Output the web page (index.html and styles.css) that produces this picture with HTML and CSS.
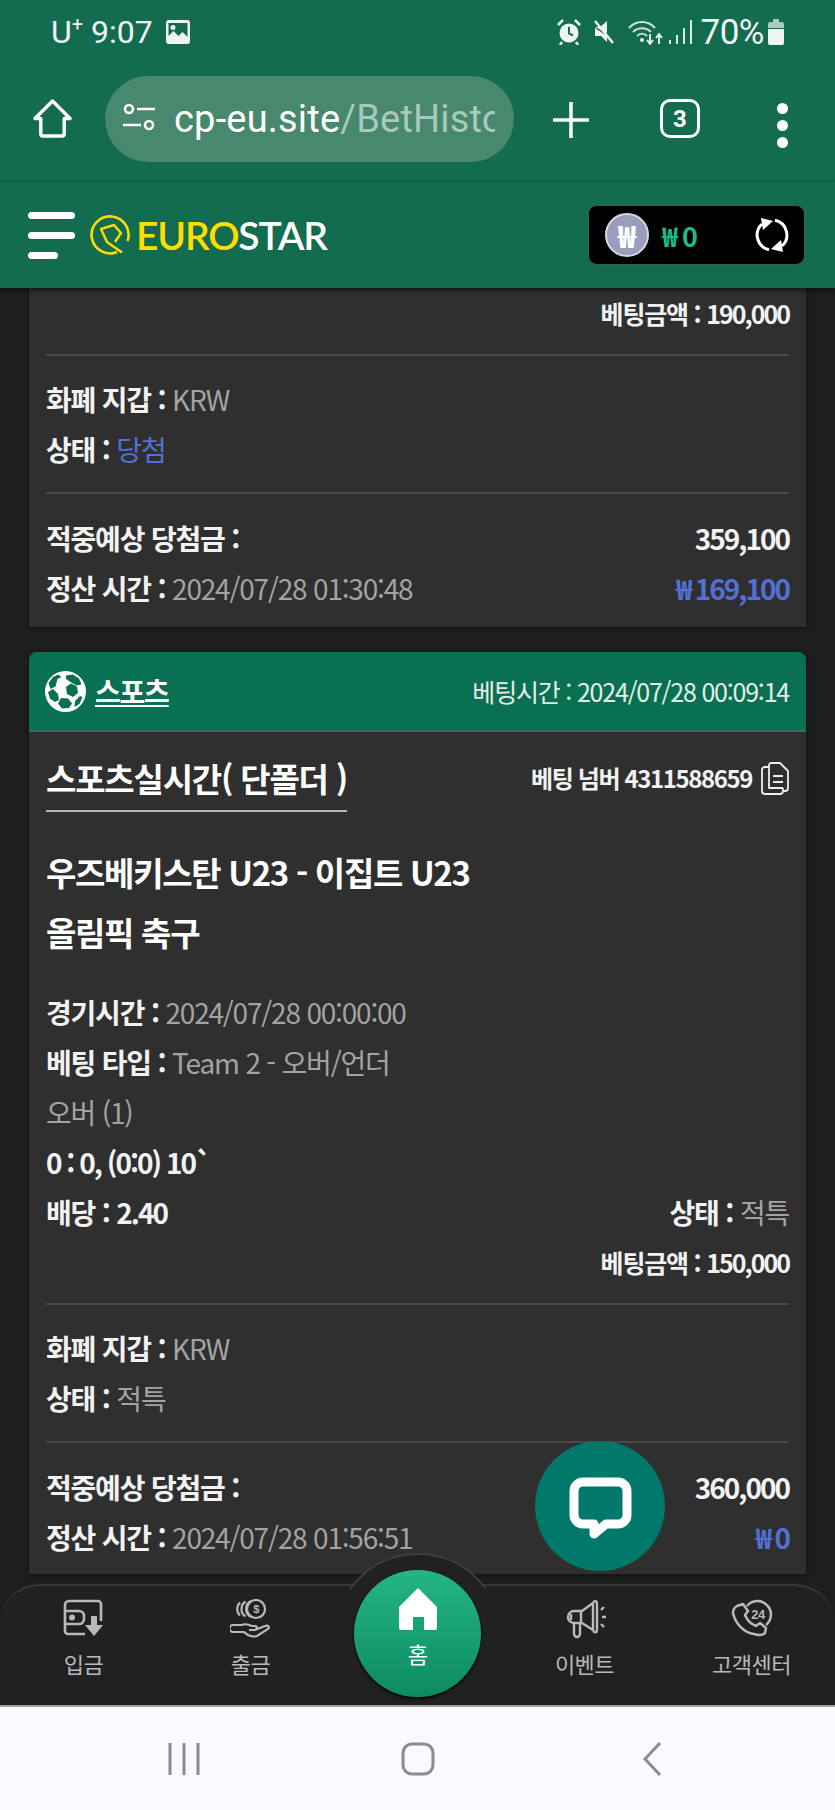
FILE: index.html
```html
<!DOCTYPE html>
<html lang="ko">
<head>
  <meta charset="UTF-8">
  <meta name="viewport" content="width=device-width, initial-scale=1.0">
  <title>베팅내역</title>
  <link rel="stylesheet" href="styles.css">
</head>
<body>
  <div class="phone-status">
    <div class="status-left">
      <span class="carrier">U<sup>+</sup></span>
      <span>9:07</span>
      <svg class="icon-gallery" viewBox="0 0 24 24"><path fill="#eef5f1" fill-rule="evenodd" d="M3 0h18a3 3 0 0 1 3 3v18a3 3 0 0 1-3 3H3a3 3 0 0 1-3-3V3a3 3 0 0 1 3-3zM2.500 3v13l5-5 5 5 4-4 5 5V3zM7 5a2.500 2.500 0 1 1 0 5 2.500 2.500 0 0 1 0-5z"/></svg>
    </div>
    <div class="status-right">
      <svg class="icon-alarm" viewBox="0 0 24 26"><circle cx="12" cy="14" r="9.500" fill="#eef5f1"/><path d="M12 8v6.500l4 2" fill="none" stroke="#136b50" stroke-width="2"/><path d="M1 6l5-5M23 6l-5-5M5 23l-2 3M19 23l2 3" stroke="#eef5f1" stroke-width="2.500"/></svg>
      <svg class="icon-mute" viewBox="0 0 22 26"><path fill="#eef5f1" d="M2 8h5l7-6v12zM2 9v8h6l6 6v-6z"/><path d="M2 2l18 22" stroke="#eef5f1" stroke-width="2.500"/></svg>
      <svg class="icon-wifi" viewBox="0 0 36 26"><path d="M1 9C8 1 20 1 27 9M5 13c5-5 13-5 18 0M9 17c3-3 7-3 10 0" fill="none" stroke="#cfe2da" stroke-width="2"/><circle cx="14" cy="21" r="2" fill="#eef5f1"/><path d="M22 15v10M19 21l3 4 3-4M31 25V15M28 19l3-4 3 4" fill="none" stroke="#eef5f1" stroke-width="1.800"/></svg>
      <svg class="icon-signal" viewBox="0 0 24 26"><path d="M2 21v4M9 16v9M16 9v16M23 1v24" stroke="#dfeae5" stroke-width="2"/></svg>
      <span class="battery-text">70%</span>
      <svg class="icon-battery" viewBox="0 0 16 26"><path fill="#a9c9bc" d="M5 0h6v3h3a2 2 0 0 1 2 2v4H0V5a2 2 0 0 1 2-2h3z"/><path fill="#eef5f1" d="M0 10h16v14a2 2 0 0 1-2 2H2a2 2 0 0 1-2-2z"/></svg>
    </div>
  </div>

  <div class="browser-bar">
    <svg class="icon-browser-home" viewBox="0 0 40 40"><path d="M2 20L20 2l18 18h-6v16a2 2 0 0 1-2 2H10a2 2 0 0 1-2-2V20z" fill="none" stroke="#fff" stroke-width="3.500" stroke-linejoin="round"/></svg>
    <div class="url-pill">
      <svg class="icon-tune" viewBox="0 0 32 32"><circle cx="6" cy="6" r="4" fill="none" stroke="#fff" stroke-width="2.500"/><path d="M14 6h18M0 22h18" stroke="#fff" stroke-width="2.500"/><circle cx="26" cy="22" r="4" fill="none" stroke="#fff" stroke-width="2.500"/></svg>
      <div class="url-text">cp-eu.site<span class="url-path">/BetHistory</span></div>
    </div>
    <svg class="icon-plus" viewBox="0 0 36 36"><path d="M18 0v36M0 18h36" stroke="#fff" stroke-width="3.500"/></svg>
    <div class="tab-count">3</div>
    <div class="dots"><i></i><i></i><i></i></div>
  </div>

  <header class="site-header">
    <div class="burger"><i></i><i></i><i class="short"></i></div>
    <svg class="logo-mark" viewBox="0 0 40 40"><path d="M37.500 26A18.500 18.500 0 1 0 27 37" fill="none" stroke="#ffdd00" stroke-width="2.600"/><path d="M32 37.500L17 27 11 14l13-4 7 8-6 9" fill="none" stroke="#ffdd00" stroke-width="2.400" stroke-linejoin="round"/></svg>
    <div class="logo-text"><span class="logo-euro">EURO</span>STAR</div>
    <div class="wallet">
      <div class="coin">₩</div>
      <div class="balance">₩ 0</div>
      <svg class="icon-refresh" viewBox="0 0 34 36"><path d="M14 32.700A15 15 0 0 1 7 7" fill="none" stroke="#fff" stroke-width="3"/><path d="M20 3.300A15 15 0 0 1 27 29" fill="none" stroke="#fff" stroke-width="3"/><path d="M6 1l12 3-10 9zM28 35l-12-3 10-9z" fill="#fff"/></svg>
    </div>
  </header>

  <main class="content">
    <section class="card card-clipped">
      <div class="row row-end row-small"><span><b>베팅금액 :</b> <b class="num">190,000</b></span></div>
      <hr class="line">
      <div class="row"><span><b>화폐 지갑 :</b> <span class="muted">KRW</span></span></div>
      <div class="row"><span><b>상태 :</b> <span class="blue">당첨</span></span></div>
      <hr class="line line-last">
      <div class="row"><b>적중예상 당첨금 :</b><b class="num">359,100</b></div>
      <div class="row"><span><b>정산 시간 :</b> <span class="muted">2024/07/28 01:30:48</span></span><b class="num blue">₩ 169,100</b></div>
    </section>

    <section class="card">
      <div class="card-head">
        <div class="head-left">
          <svg class="icon-ball" viewBox="0 0 41 41"><circle cx="20.500" cy="20.500" r="20.500" fill="#fff"/><g fill="#0a7052"><path d="M13 3.500L8 6 3.500 12l2 6 5-2.500 2-7.500 4-2z"/><path d="M21 4.500l7-1 6 4 2.500 6-5 1-6-3.500-4.500-3z"/><path d="M21 16l5-3.500 6 3 1 6.500-5 4-6-3z"/><path d="M3 21l5-3 5 5 1 6-4 2-5-3.500z"/><path d="M16 27l7 .5 4 5-3 4.500-7 .5-4-5z"/><path d="M30 30l5-5 2.500 1-3 7-5 3z"/></g></svg>
          <span class="sport-name">스포츠</span>
        </div>
        <div class="bet-time">베팅시간 : 2024/07/28 00:09:14</div>
      </div>
      <div class="card-body">
        <div class="title-row">
          <h2 class="game-type">스포츠실시간( 단폴더 )</h2>
          <div class="bet-no">
            <b>베팅 넘버 4311588659</b>
            <svg class="icon-copy" viewBox="0 0 28 33"><path d="M8 5V3a2 2 0 0 1 2-2h9l8 8v17a3 3 0 0 1-3 3h-2M8 5H4a3 3 0 0 0-3 3v21a3 3 0 0 0 3 3h15a3 3 0 0 0 3-3V26M8 5v21h14" fill="none" stroke="#eee" stroke-width="1.800" stroke-linejoin="round"/><path d="M12 14h10M12 20h10" stroke="#eee" stroke-width="1.800"/></svg>
          </div>
        </div>
        <h3 class="match">우즈베키스탄 U23 - 이집트 U23<br>올림픽 축구</h3>
        <div class="row"><span><b>경기시간 :</b> <span class="muted">2024/07/28 00:00:00</span></span></div>
        <div class="row"><span><b>베팅 타입 :</b> <span class="muted">Team 2 - 오버/언더</span></span></div>
        <div class="row"><span class="muted">오버 (1)</span></div>
        <div class="row"><b class="num">0 : 0, (0:0) 10`</b></div>
        <div class="row"><span><b>배당 :</b> <b class="num">2.40</b></span><span><b>상태 :</b> <span class="muted">적특</span></span></div>
        <div class="row row-end row-small"><span><b>베팅금액 :</b> <b class="num">150,000</b></span></div>
        <hr class="line">
        <div class="row"><span><b>화폐 지갑 :</b> <span class="muted">KRW</span></span></div>
        <div class="row"><span><b>상태 :</b> <span class="muted">적특</span></span></div>
        <hr class="line line-last">
        <div class="row"><b>적중예상 당첨금 :</b><b class="num">360,000</b></div>
        <div class="row"><span><b>정산 시간 :</b> <span class="muted">2024/07/28 01:56:51</span></span><b class="num blue">₩ 0</b></div>
      </div>
    </section>
  </main>

  <div class="chat-fab">
    <svg viewBox="0 0 63 62"><path d="M14 5h35a9 9 0 0 1 9 9v24a9 9 0 0 1-9 9H37L25 57v-10H14a9 9 0 0 1-9-9V14a9 9 0 0 1 9-9z" fill="none" stroke="#fff" stroke-width="9" stroke-linejoin="round"/></svg>
  </div>

  <nav class="bottom-nav">
    <svg class="nav-dome" viewBox="0 0 140 36"><path d="M2 36C20 12 44 1 70 1s50 11 68 35z" fill="#212121"/><path d="M2 36C20 12 44 1 70 1s50 11 68 35" fill="none" stroke="#3d3d3d" stroke-width="2"/></svg>
    <a class="nav-item">
      <svg viewBox="0 0 42 40"><path d="M38 22V5a3 3 0 0 0-3-3H6a4 4 0 0 0-4 4v26a3 3 0 0 0 3 3h17" fill="none" stroke="#b9b9b9" stroke-width="2.600"/><path d="M2 12h14a5 5 0 0 1 5 5v3a5 5 0 0 1-5 5H2" fill="none" stroke="#b9b9b9" stroke-width="2.600"/><circle cx="9" cy="18.500" r="3" fill="#b9b9b9"/><path d="M28 17h6v9h6L31 37l-9-11h6z" fill="#b9b9b9"/></svg>
      <span>입금</span>
    </a>
    <a class="nav-item">
      <svg viewBox="0 0 42 40"><g fill="none" stroke="#b9b9b9" stroke-width="2.200"><circle cx="26" cy="10" r="9"/><path d="M21 2a9 9 0 0 0 0 16M15.500 2.500a9 9 0 0 0 0 15M10 3.500a9 9 0 0 0 0 13"/><path d="M3 26h9c3-2 7 0 10 1h3c3 0 2 4-1 4h-5 6l10-4c3-1 5 1 3 3l-11 7c-3 1-7 0-9-1l-4-3H3a2.500 2.500 0 0 1 0-7z"/></g><text x="26" y="14" font-size="11" font-weight="700" text-anchor="middle" fill="#b9b9b9" font-family="Liberation Sans, sans-serif">$</text></svg>
      <span>출금</span>
    </a>
    <a class="nav-item nav-home">
      <div class="home-circle">
        <svg viewBox="0 0 38 42"><path d="M19 0l19 19v21a2 2 0 0 1-2 2H25V29H14v13H2a2 2 0 0 1-2-2V19z" fill="#fff"/></svg>
        <span>홈</span>
      </div>
    </a>
    <a class="nav-item">
      <svg viewBox="0 0 42 40"><g fill="none" stroke="#b9b9b9" stroke-width="2.400" stroke-linejoin="round"><path d="M10 12h8l11-8v27l-11-7H10a6 6 0 0 1 0-12z"/><path d="M29 3c4-2 4 0 4 4v22c0 4 0 6-4 3"/><path d="M10 24v11a3 3 0 0 0 6 0V24M17 12v12M7 15v6"/><path d="M37 11l3-3M38 18h4M37 25l3 3"/></g></svg>
      <span>이벤트</span>
    </a>
    <a class="nav-item">
      <svg viewBox="2 1 40 40"><g fill="none" stroke="#b9b9b9" stroke-width="2.500" stroke-linejoin="round"><path d="M17 8A13.500 13.500 0 1 1 36 27"/><path d="M7 8l6-2 5 7-3 4c2 5 6 9 11 11l4-3 6 5-1 5c-3 3-8 2-11 1C14 35 5 25 3 15c0-3 2-6 4-7z"/></g><text x="28" y="21" font-size="13" font-weight="700" text-anchor="middle" fill="#b9b9b9" font-family="Liberation Sans, sans-serif">24</text></svg>
      <span>고객센터</span>
    </a>
  </nav>

  <div class="phone-nav">
    <div class="phone-btn">
      <svg class="icon-recents" viewBox="0 0 32 32"><path d="M2 0v32M16 0v32M30 0v32" stroke="#8c8c8c" stroke-width="3"/></svg>
    </div>
    <div class="phone-btn">
      <svg class="icon-homebtn" viewBox="0 0 34 34"><rect x="2" y="2" width="30" height="30" rx="9" fill="none" stroke="#8c8c8c" stroke-width="3"/></svg>
    </div>
    <div class="phone-btn">
      <svg class="icon-back" viewBox="0 0 20 34"><path d="M18 1L3 17l15 16" fill="none" stroke="#8c8c8c" stroke-width="3"/></svg>
    </div>
  </div>
</body>
</html>
```

FILE: styles.css
```css
* {
  margin: 0;
  padding: 0;
  box-sizing: border-box;
}

body {
  position: relative;
  width: 835px;
  height: 1810px;
  overflow: hidden;
  display: flex;
  flex-direction: column;
  font-family: "Noto Sans CJK KR", "Noto Sans", sans-serif;
  background: #1e1e1e;
  color: #f2f2f2;
}

/* phone status bar */
.phone-status {
  height: 62px;
  padding: 2px 51px 0 51px;
  display: flex;
  justify-content: space-between;
  align-items: center;
  background: #136b50;
  color: #eef5f1;
  font-family: Roboto, sans-serif;
  font-size: 32px;
}

.status-left,
.status-right {
  display: flex;
  align-items: center;
}

.status-left span:nth-child(2) {
  margin-left: 8px;
}

.carrier sup {
  font-size: 20px;
  line-height: 0;
}

.icon-gallery {
  width: 24px;
  height: 24px;
  margin-left: 13px;
}

.icon-alarm {
  width: 24px;
  height: 26px;
}

.icon-mute {
  width: 22px;
  height: 26px;
  margin-left: 12px;
}

.icon-wifi {
  width: 36px;
  height: 26px;
  margin-left: 13px;
}

.icon-signal {
  width: 24px;
  height: 26px;
  margin-left: 4px;
}

.battery-text {
  margin-left: 9px;
  font-size: 35px;
  letter-spacing: -0.5px;
}

.icon-battery {
  width: 16px;
  height: 26px;
  margin-left: 4px;
}

/* browser toolbar */
.browser-bar {
  height: 120px;
  padding: 14px 0 0 33px;
  display: flex;
  align-items: flex-start;
  background: #136b50;
  border-bottom: 1px solid #0f6046;
}

.icon-browser-home {
  width: 39px;
  height: 39px;
  margin-top: 23px;
}

.url-pill {
  width: 409px;
  height: 86px;
  margin-left: 33px;
  padding: 0 18px 0 18px;
  display: flex;
  align-items: center;
  border-radius: 43px;
  background: #47886f;
}

.icon-tune {
  width: 32px;
  height: 32px;
  flex: none;
}

.url-text {
  width: 321px;
  margin-left: 19px;
  overflow: hidden;
  white-space: nowrap;
  font-family: Roboto, sans-serif;
  font-size: 38px;
  letter-spacing: 0.2px;
  color: #fff;
}

.url-path {
  color: #a8c9bc;
}

.icon-plus {
  width: 36px;
  height: 36px;
  margin: 26px 0 0 39px;
}

.tab-count {
  width: 40px;
  height: 39px;
  margin: 23px 0 0 71px;
  display: flex;
  align-items: center;
  justify-content: center;
  border: 3px solid #fff;
  border-radius: 10px;
  font-family: Roboto, sans-serif;
  font-size: 24px;
  font-weight: 700;
  color: #fff;
}

.dots {
  margin: 27px 0 0 77px;
  display: flex;
  flex-direction: column;
  gap: 6px;
}

.dots i {
  display: block;
  width: 11px;
  height: 11px;
  border-radius: 50%;
  background: #fff;
}

/* site header */
.site-header {
  height: 106px;
  padding: 0 30px 0 28px;
  display: flex;
  align-items: center;
  background: #136b50;
  box-shadow: 0 2px 5px rgba(0, 0, 0, 0.6);
  position: relative;
  z-index: 1;
}

.burger {
  width: 47px;
  display: flex;
  flex-direction: column;
  gap: 13px;
}

.burger i {
  display: block;
  height: 7px;
  border-radius: 4px;
  background: #fff;
}

.burger .short {
  width: 30px;
}

.logo-mark {
  width: 40px;
  height: 40px;
  margin-left: 15px;
}

.logo-text {
  margin-left: 6px;
  font-family: Lato, sans-serif;
  font-size: 39px;
  font-weight: 600;
  letter-spacing: -1.2px;
  color: #fff;
}

.logo-euro {
  color: #ffdd00;
}

.wallet {
  width: 217px;
  height: 60px;
  margin-left: auto;
  padding: 0 15px 0 16px;
  display: flex;
  align-items: center;
  border: 1px solid #3c5c50;
  border-radius: 9px;
  background: #000;
}

.coin {
  width: 44px;
  height: 44px;
  display: flex;
  align-items: center;
  justify-content: center;
  border: 2px solid #d9d9e6;
  border-radius: 50%;
  background: #9a9dbd;
  color: #fff;
  font-size: 30px;
  font-weight: 900;
}

.balance {
  margin-left: 13px;
  font-size: 27px;
  font-weight: 700;
  letter-spacing: -1px;
  color: #1fb88a;
}

.icon-refresh {
  width: 34px;
  height: 36px;
  margin-left: auto;
}

/* cards */
.content {
  flex: 1;
  overflow: hidden;
  padding: 0 29px;
  font-size: 28px;
  letter-spacing: -1.2px;
}

.card {
  margin-bottom: 25px;
  border-radius: 8px 8px 0 0;
  background: #2f2f2f;
  box-shadow: 0 1px 4px rgba(0, 0, 0, 0.5);
  padding-bottom: 12px;
}

.card-clipped {
  padding: 0 17px 14px;
  border-radius: 0;
}

.card-body {
  padding: 0 17px;
}

.row {
  height: 50px;
  display: flex;
  justify-content: space-between;
  align-items: center;
  white-space: nowrap;
}

.row-end {
  justify-content: flex-end;
}

.row-small {
  font-size: 25px;
}

.row b {
  font-weight: 700;
}

.row .num {
  letter-spacing: -2px;
}

.muted {
  color: #a3a3a3;
}

.blue {
  color: #5470d6;
}

.line {
  height: 2px;
  margin: 16px 0 18px;
  border: 0;
  background: #484848;
}

.line-last {
  margin: 18px 0 19px;
}

.card-head {
  height: 80px;
  padding: 0 17px 0 16px;
  display: flex;
  justify-content: space-between;
  align-items: center;
  border-radius: 8px 8px 0 0;
  border-bottom: 2px solid #2d7561;
  background: #0a7052;
}

.head-left {
  display: flex;
  align-items: center;
}

.icon-ball {
  width: 41px;
  height: 41px;
}

.sport-name {
  margin-left: 9px;
  font-size: 28px;
  font-weight: 700;
  text-decoration: underline;
  color: #fff;
}

.bet-time {
  font-size: 25px;
  color: #e3eee9;
}

.title-row {
  padding-top: 23px;
  display: flex;
  justify-content: space-between;
  align-items: flex-start;
}

.game-type {
  width: 301px;
  height: 57px;
  border-bottom: 2px solid #b5b5b5;
  font-size: 33px;
  line-height: 46px;
  font-weight: 700;
  white-space: nowrap;
  color: #fff;
}

.bet-no {
  display: flex;
  align-items: center;
  font-size: 24px;
  line-height: 46px;
  letter-spacing: -1.400px;
}

.icon-copy {
  width: 28px;
  height: 33px;
  margin-left: 9px;
}

.match {
  margin: 30px 0 25px;
  font-size: 33px;
  line-height: 60px;
  font-weight: 700;
  letter-spacing: -1.300px;
  color: #fff;
}

/* floating chat */
.chat-fab {
  position: absolute;
  left: 535px;
  top: 1441px;
  width: 130px;
  height: 130px;
  display: flex;
  align-items: center;
  justify-content: center;
  border-radius: 50%;
  background: #00796b;
}

.chat-fab svg {
  width: 63px;
  height: 62px;
  margin-top: 3px;
}

/* bottom nav */
.bottom-nav {
  position: relative;
  height: 121px;
  display: grid;
  grid-template-columns: repeat(5, 1fr);
  border-top: 2px solid #383838;
  border-radius: 40px 40px 0 0;
  background: #212121;
  letter-spacing: -0.5px;
}

.nav-dome {
  position: absolute;
  left: 348px;
  top: -33px;
  width: 140px;
  height: 36px;
}

.nav-item {
  padding-top: 13px;
  display: flex;
  flex-direction: column;
  align-items: center;
  font-size: 22px;
  line-height: 30px;
  color: #b9b9b9;
}

.nav-item svg {
  width: 42px;
  height: 40px;
  margin-bottom: 9px;
}

.home-circle {
  position: absolute;
  left: 354px;
  top: -16px;
  width: 127px;
  height: 127px;
  padding-top: 18px;
  display: flex;
  flex-direction: column;
  align-items: center;
  border-radius: 50%;
  background: linear-gradient(#24b685, #0d8a62);
  box-shadow: 0 2px 3px rgba(0, 0, 0, 0.9);
  color: #fff;
}

.nav-item .home-circle svg {
  width: 38px;
  height: 42px;
  margin-bottom: 8px;
}

/* phone nav */
.phone-nav {
  height: 105px;
  display: flex;
  justify-content: center;
  align-items: center;
  border-top: 2px solid #a0a0a4;
  background: #f9f9ff;
}

.phone-btn {
  width: 234px;
  display: flex;
  justify-content: center;
}

.icon-recents {
  width: 32px;
  height: 32px;
}

.icon-homebtn {
  width: 34px;
  height: 34px;
}

.icon-back {
  width: 20px;
  height: 34px;
}
```
